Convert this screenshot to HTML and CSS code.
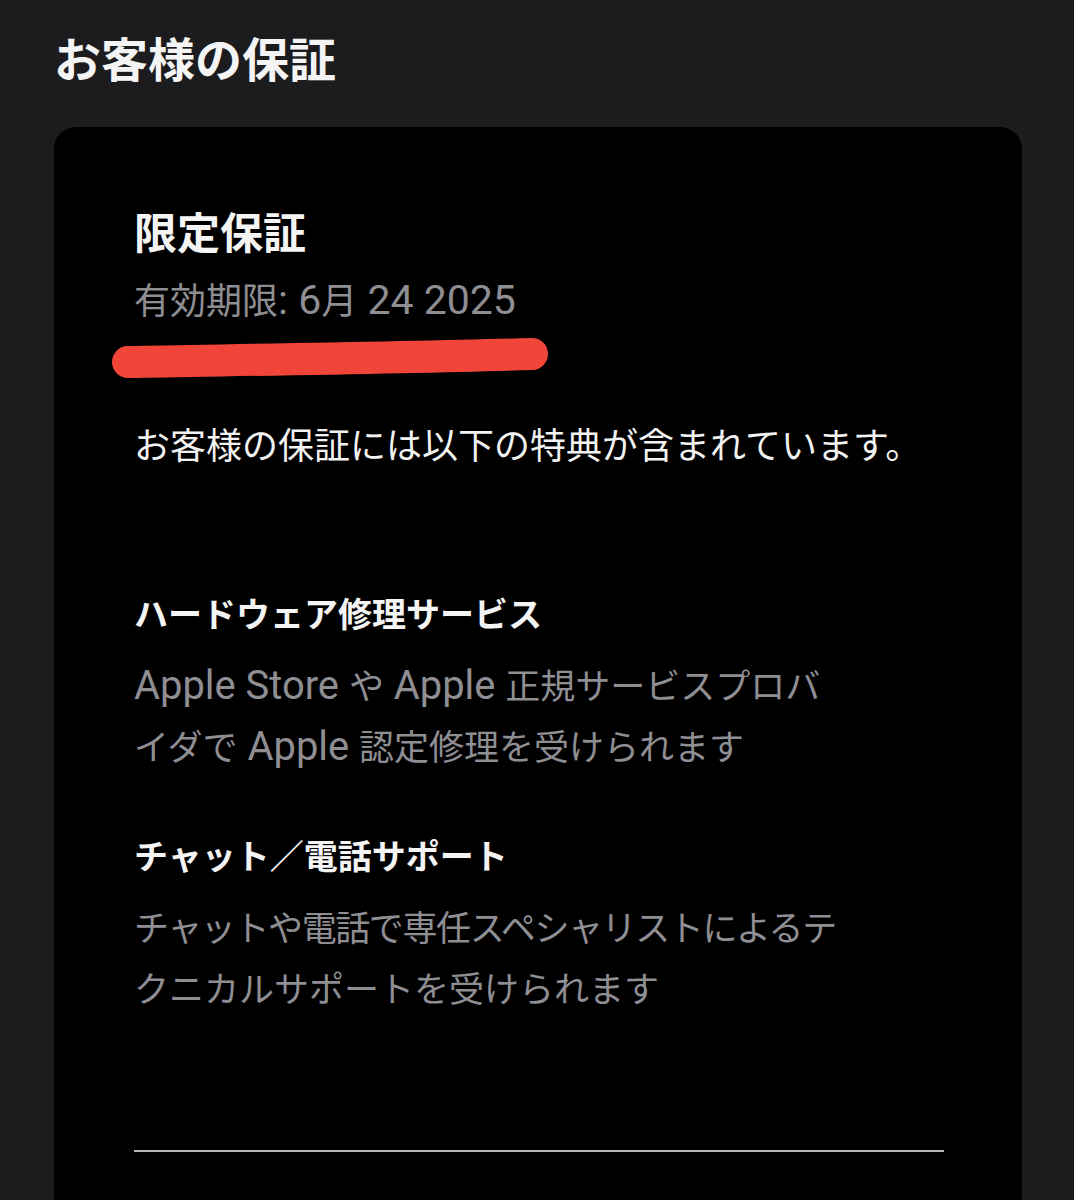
FILE: index.html
```html
<!DOCTYPE html>
<html lang="ja">
<head>
<meta charset="utf-8">
<link rel="stylesheet" href="styles.css">
</head>
<body>
<h1 class="page-title">お客様の保証</h1>
<section class="card">
  <svg class="marker" width="460" height="60" viewBox="0 0 460 60" aria-hidden="true">
    <path d="M31 32 C 140 30, 300 28, 435 24" fill="none" stroke="#f2453a" stroke-width="32" stroke-linecap="round"/>
  </svg>
  <h2 class="plan">限定保証</h2>
  <p class="expiry">有効期限<span class="lat">: 6</span>月<span class="lat"> 24 2025</span></p>
  <p class="intro">お客様の保証には以下の特典が含まれています。</p>
  <h3 class="benefit-title first">ハードウェア修理サービス</h3>
  <p class="benefit-desc"><span class="lat">Apple Store </span>や<span class="lat"> Apple </span>正規サービスプロバ<br>イダで<span class="lat"> Apple </span>認定修理を受けられます</p>
  <h3 class="benefit-title">チャット／電話サポート</h3>
  <p class="benefit-desc"><span class="tight">チャットや電話で専任スペシャリストによるテ</span><br>クニカルサポートを受けられます</p>
  <hr class="divider">
</section>
</body>
</html>
```

FILE: styles.css
```css
html, body {
  margin: 0;
  padding: 0;
  background: #1c1c1e;
  height: 1200px;
  overflow: hidden;
}
body {
  font-family: Roboto, "Noto Sans CJK JP", sans-serif;
  color: #f2f2f2;
}
.page-title {
  margin: 0;
  padding: 33px 0 0 54px;
  font-size: 47px;
  line-height: 56px;
  font-weight: 700;
  color: #f4f4f4;
}
.card {
  position: relative;
  margin: 38px 52px 0 54px;
  background: #000;
  border-radius: 22px;
  padding: 80px 80px 200px 80px;
}
.marker {
  position: absolute;
  left: 43px;
  top: 203px;
  overflow: visible;
}
.plan {
  margin: 0;
  font-size: 43px;
  line-height: 54px;
  font-weight: 700;
  color: #f4f4f4;
}
.expiry {
  margin: 18px 0 0;
  font-size: 36px;
  line-height: 46px;
  color: #8e8e93;
}
.lat {
  font-size: 1.14em;
  line-height: 1;
}
.tight {
  letter-spacing: -1.4px;
}
.intro {
  margin: 100px 0 0;
  font-size: 36px;
  line-height: 44px;
  color: #f2f2f2;
}
.benefit-title {
  margin: 56px 0 0;
  font-size: 34px;
  line-height: 44px;
  font-weight: 700;
  color: #f4f4f4;
}
.benefit-title.first {
  margin-top: 124px;
}
.benefit-desc {
  margin: 20px 0 0;
  white-space: nowrap;
  font-size: 35px;
  line-height: 61px;
  color: #8e8e93;
}
.divider {
  margin: 129px 0 0;
  width: 810px;
  border: 0;
  height: 2px;
  background: #b8b8b8;
}
```
